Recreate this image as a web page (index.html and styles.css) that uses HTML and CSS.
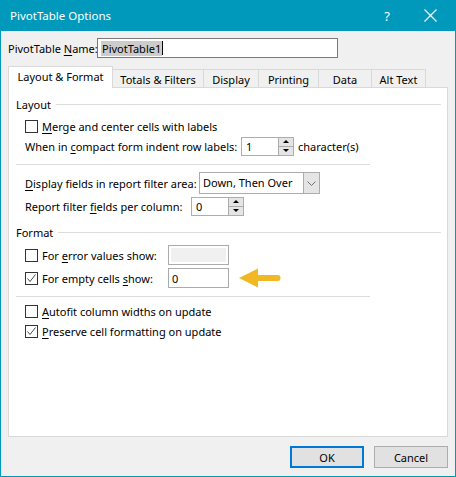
FILE: index.html
```html
<!DOCTYPE html>
<html>
<head>
<meta charset="utf-8">
<link rel="stylesheet" href="styles.css">
</head>
<body>
<div class="window">
  <div class="titlebar">
    <span class="title">PivotTable Options</span>
    <span class="help">?</span>
    <svg class="close" width="13" height="13" viewBox="0 0 13 13"><path d="M0.5 0.5 L12.5 12.5 M12.5 0.5 L0.5 12.5" stroke="#fff" stroke-width="1.2" fill="none"/></svg>
  </div>
  <div class="content">
    <div class="name-row">
      <span class="name-label">PivotTable <u>N</u>ame:</span>
      <div class="name-input"><span class="sel">PivotTable1</span><span class="caret"></span></div>
    </div>
    <div class="tabs">
      <div class="tab active">Layout &amp; Format</div>
      <div class="tab w-totals">Totals &amp; Filters</div>
      <div class="tab w-display">Display</div>
      <div class="tab w-printing">Printing</div>
      <div class="tab w-data">Data</div>
      <div class="tab w-alt">Alt Text</div>
    </div>
    <div class="panel">
      <div class="heading"><span>Layout</span><span class="hline"></span></div>
      <div class="row r-merge">
        <span class="cb"></span><span><u>M</u>erge and center cells with labels</span>
      </div>
      <div class="row r-indent">
        <span class="lbl lbl-indent">When in <u>c</u>ompact form indent row labels:</span>
        <div class="spin spin-indent"><span class="spin-val">1</span><span class="spin-btns"><span class="sb up"></span><span class="sb down"></span></span></div>
        <span class="after">character(s)</span>
      </div>
      <div class="sep"></div>
      <div class="row r-display">
        <span class="lbl lbl-display"><u>D</u>isplay fields in report filter area:</span>
        <div class="select"><span class="select-val">Down, Then Over</span><span class="select-btn"><svg width="9" height="5" viewBox="0 0 9 5"><path d="M0.5 0.5 L4.5 4.5 L8.5 0.5" stroke="#707070" fill="none"/></svg></span></div>
      </div>
      <div class="row r-report">
        <span class="lbl lbl-report">Report filter <u>f</u>ields per column:</span>
        <div class="spin spin-report"><span class="spin-val">0</span><span class="spin-btns"><span class="sb up"></span><span class="sb down"></span></span></div>
      </div>
      <div class="heading h-format"><span>Format</span><span class="hline"></span></div>
      <div class="row r-error">
        <span class="cb"></span><span class="lbl lbl-cbx">For <u>e</u>rror values show:</span>
        <div class="tbox disabled"><span class="fill"></span></div>
      </div>
      <div class="row r-empty">
        <span class="cb checked"><svg width="11" height="11" viewBox="0 0 11 11"><path d="M1.5 5.5 L4 8.5 L9.5 1.5" stroke="#4a4a4a" stroke-width="1" fill="none"/></svg></span><span class="lbl lbl-cbx">For empty cells <u>s</u>how:</span>
        <div class="tbox"><span class="tval">0</span></div>
        <svg class="arrow" width="42" height="20" viewBox="0 0 42 20"><path d="M0 10 L19 0.5 L19 19.5 Z" fill="#F2B824"/><path d="M17 10 L38.5 10" stroke="#F2B824" stroke-width="6" stroke-linecap="round"/></svg>
      </div>
      <div class="sep sep2"></div>
      <div class="row r-autofit">
        <span class="cb"></span><span><u>A</u>utofit column widths on update</span>
      </div>
      <div class="row r-preserve">
        <span class="cb checked"><svg width="11" height="11" viewBox="0 0 11 11"><path d="M1.5 5.5 L4 8.5 L9.5 1.5" stroke="#4a4a4a" stroke-width="1" fill="none"/></svg></span><span><u>P</u>reserve cell formatting on update</span>
      </div>
    </div>
    <div class="buttons">
      <div class="btn ok">OK</div>
      <div class="btn">Cancel</div>
    </div>
  </div>
</div>
</body>
</html>
```
FILE: styles.css
```css
* { box-sizing: border-box; }
html, body { margin: 0; padding: 0; }
body {
  font-family: "Noto Sans", "Open Sans", sans-serif;
  font-size: 11px;
  color: #000;
  background: #fff;
  white-space: nowrap;
}
u { text-decoration: underline; text-underline-offset: 2px; text-decoration-thickness: 1px; }

.window {
  width: 456px;
  height: 477px;
  display: flex;
  flex-direction: column;
}
.titlebar {
  height: 31px;
  flex: none;
  background: #0099BC;
  color: #fff;
  display: flex;
  align-items: center;
  padding-left: 10px;
  padding-right: 19px;
}
.title { flex: 1; font-size: 11.5px; }
.help { width: 10px; text-align: center; font-size: 13px; margin-right: 32px; }
.close { display: block; }

.content {
  flex: 1;
  background: #F0F0F0;
  border: 1px solid #0099BC;
  border-top: none;
  display: flex;
  flex-direction: column;
}

.name-row {
  margin-top: 7px;
  padding-left: 7px;
  height: 20px;
  display: flex;
  align-items: center;
}
.name-label { width: 89px; }
.name-input {
  width: 241px;
  height: 20px;
  border: 1px solid #7A7A7A;
  background: #fff;
  display: flex;
  align-items: center;
  padding-left: 3px;
}
.sel { background: #CCCCCC; line-height: 15px; padding: 0 1px; }
.caret { width: 1px; height: 14px; background: #000; }

.tabs {
  margin-top: 8px;
  margin-left: 7px;
  height: 21px;
  display: flex;
  align-items: flex-end;
  position: relative;
  z-index: 1;
}
.tab {
  height: 18px;
  border-top: 1px solid #D9D9D9;
  border-right: 1px solid #D9D9D9;
  background: #F0F0F0;
  display: flex;
  align-items: center;
  justify-content: center;
  padding-top: 1px;
}
.tab.active {
  width: 105px;
  height: 22px;
  margin-bottom: -1px;
  background: #fff;
  border-left: 1px solid #D9D9D9;
  padding-top: 0;
  padding-bottom: 2px;
}
.w-totals { width: 91px; }
.w-display { width: 55px; }
.w-printing { width: 60px; }
.w-data { width: 53px; }
.w-alt { width: 54px; }

.panel {
  margin-left: 7px;
  width: 440px;
  height: 350px;
  background: #fff;
  border: 1px solid #D9D9D9;
  padding-top: 8px;
  padding-right: 6px;
}
.heading {
  height: 16px;
  padding-left: 7px;
  display: flex;
  align-items: center;
}
.hline { flex: 1; height: 1px; background: #DCDCDC; margin-left: 5px; }
.h-format { margin-top: 8px; }

.row {
  height: 20px;
  padding-left: 16px;
  display: flex;
  align-items: center;
}
.r-merge { margin-top: 4px; }
.r-display { height: 22px; margin-top: 7px; }
.r-report { margin-top: 2px; }
.r-error { margin-top: 5px; }
.r-empty { margin-top: 3px; }
.r-autofit { margin-top: 4px; }

.sep { margin-top: 8px; margin-left: 7px; width: 354px; height: 1px; background: #DCDCDC; }

.cb {
  width: 13px;
  height: 13px;
  border: 1px solid #333;
  background: #fff;
  margin-right: 4px;
  flex: none;
  display: flex;
  align-items: center;
  justify-content: center;
}
.cb svg { display: block; }

.lbl { flex: none; }
.lbl-indent { width: 216px; }
.lbl-display { width: 174px; }
.lbl-report { width: 166px; }
.lbl-cbx { width: 126px; }

.spin {
  width: 53px;
  height: 19px;
  border: 1px solid #ABADB3;
  background: #fff;
  display: flex;
}
.spin-val { flex: 1; padding-left: 4px; line-height: 17px; }
.spin-btns {
  width: 15px;
  display: flex;
  flex-direction: column;
  border-left: 1px solid #ACACAC;
}
.sb {
  flex: 1;
  background: #E5E5E5;
  position: relative;
}
.sb.up { border-bottom: 1px solid #ACACAC; }
.sb::after {
  content: "";
  position: absolute;
  left: 4px;
  width: 0; height: 0;
  border-left: 3px solid transparent;
  border-right: 3px solid transparent;
}
.sb.up::after { top: 2px; border-bottom: 3px solid #000; }
.sb.down::after { top: 2px; border-top: 3px solid #000; }
.after { margin-left: 4px; }

.select {
  width: 121px;
  height: 22px;
  border: 1px solid #ACACAC;
  background: #fff;
  display: flex;
}
.select-val { flex: 1; padding-left: 3px; line-height: 20px; }
.select-btn {
  width: 16px;
  background: #E5E5E5;
  border-left: 1px solid #ACACAC;
  display: flex;
  align-items: center;
  justify-content: center;
}
.select-btn svg { display: block; }

.tbox {
  width: 61px;
  height: 20px;
  border: 1px solid #ABABAB;
  background: #fff;
  padding: 2px;
  display: flex;
  align-items: center;
}
.tbox .fill { flex: 1; align-self: stretch; background: #F0F0F0; }
.tval { padding-left: 1px; }
.arrow { margin-left: 10px; display: block; }

.buttons {
  margin-top: 9px;
  padding-right: 7px;
  display: flex;
  justify-content: flex-end;
  gap: 10px;
}
.btn {
  width: 74px;
  height: 22px;
  background: #E1E1E1;
  border: 1px solid #ADADAD;
  display: flex;
  align-items: center;
  justify-content: center;
}
.btn.ok { border: 2px solid #0078D7; }
```
